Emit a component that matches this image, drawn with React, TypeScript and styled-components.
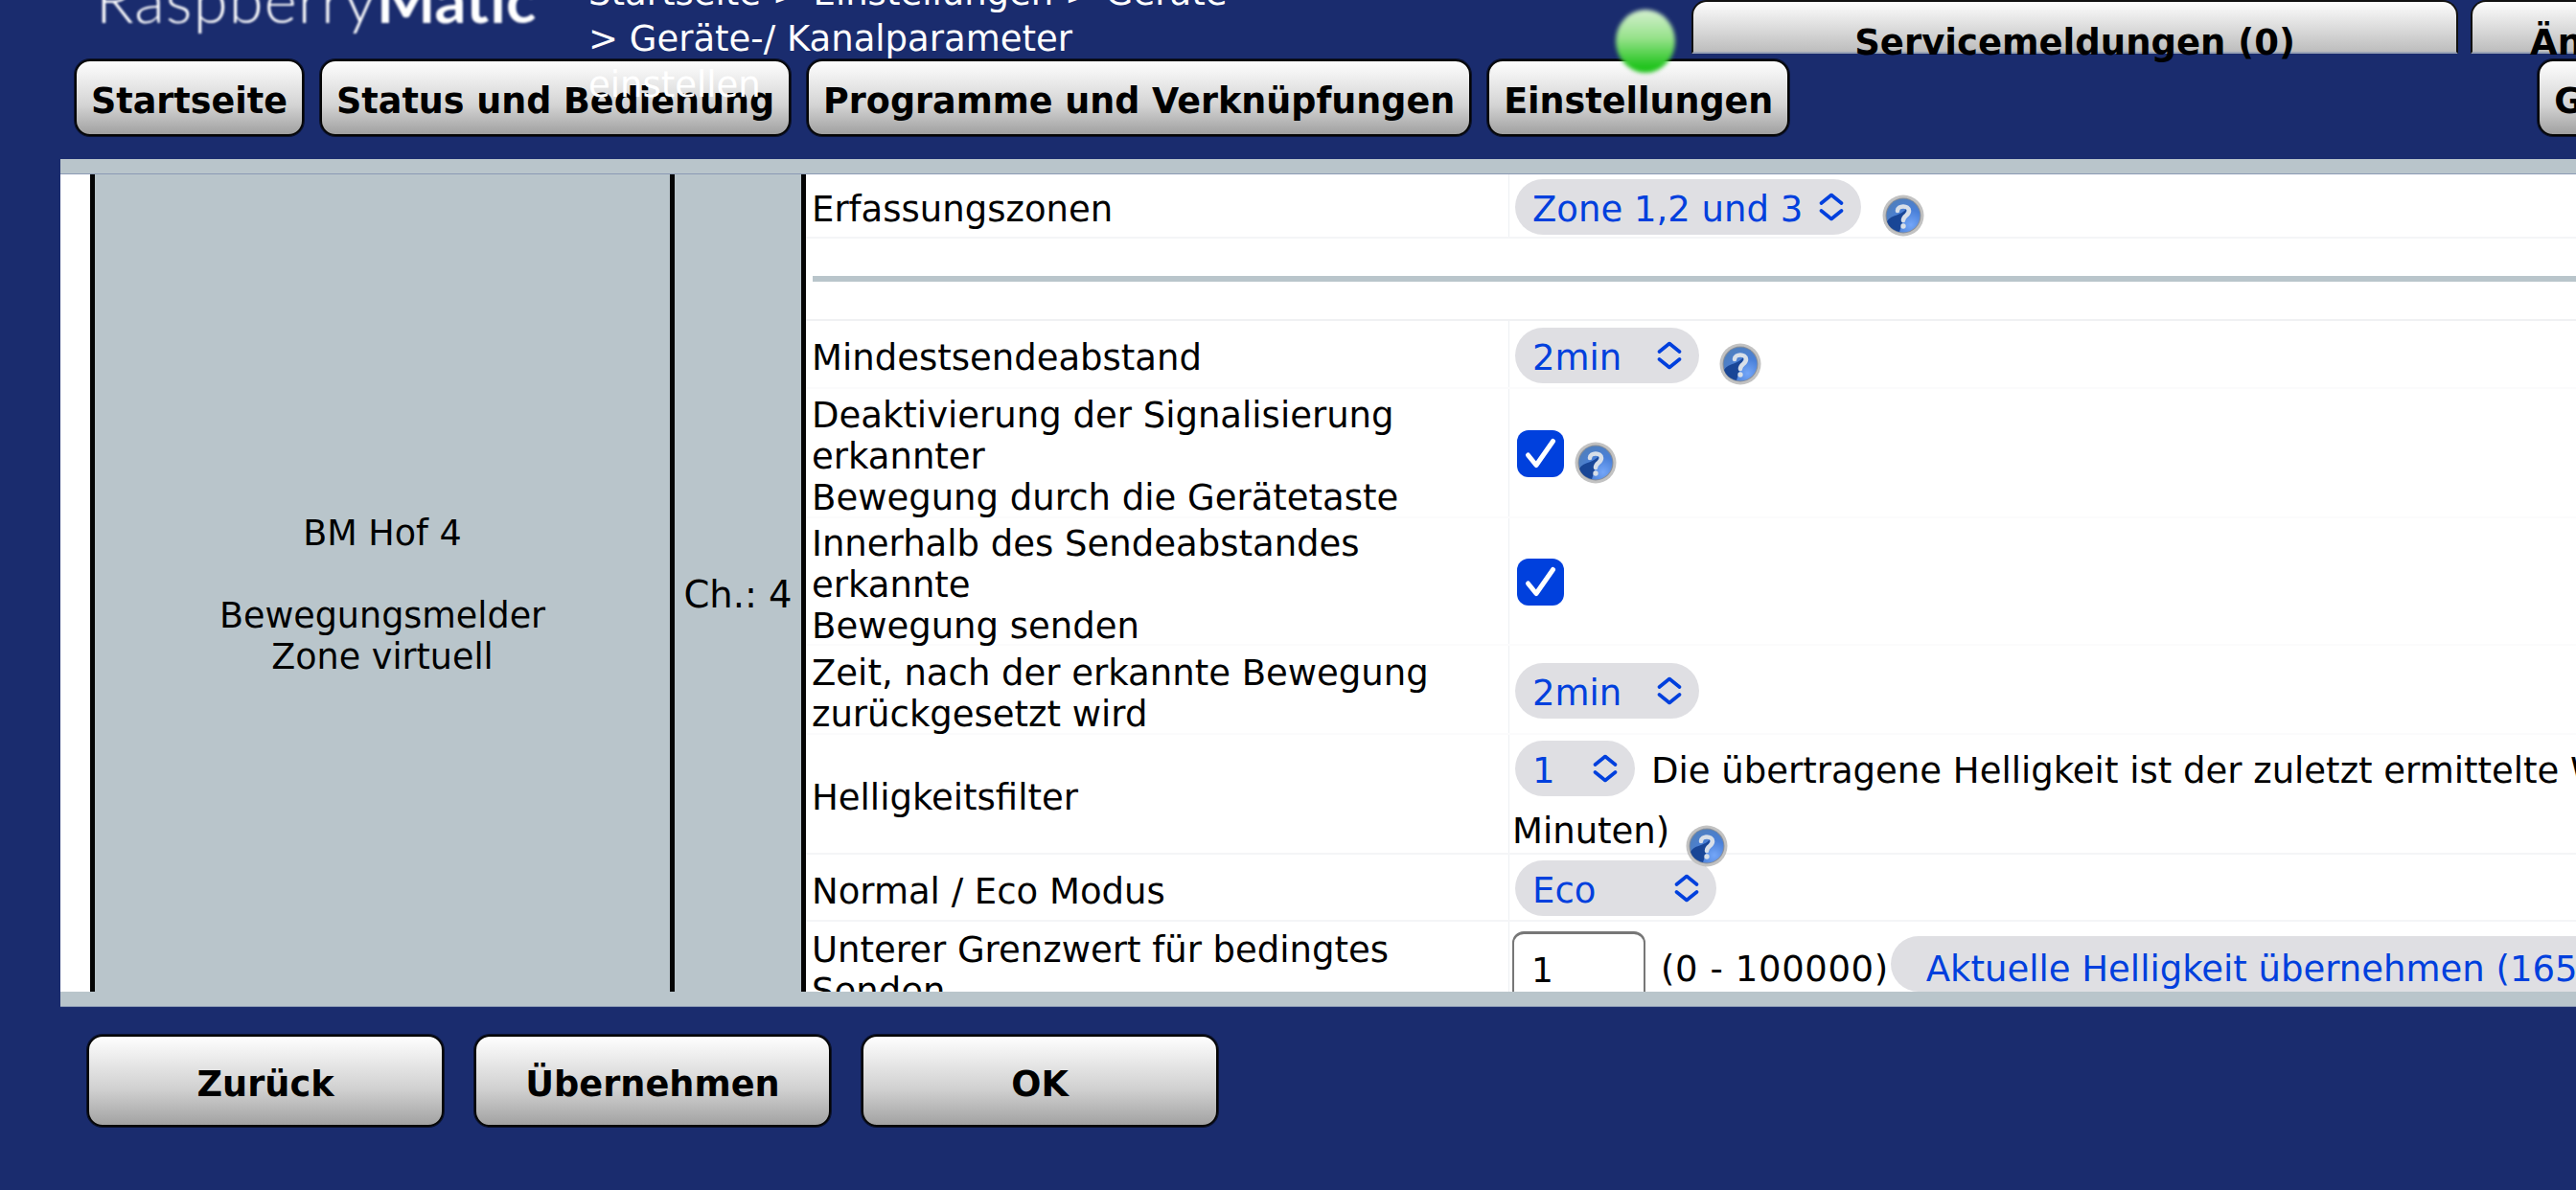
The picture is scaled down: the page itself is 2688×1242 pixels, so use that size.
import React from "react"
import styled, { createGlobalStyle } from "styled-components"

const NAVY = "#1a2c6e"
const BAND = "#b9c5cb"
const BLUE = "#0040dd"
const FONT = `"DejaVu Sans", Verdana, sans-serif`

const GlobalStyle = createGlobalStyle`
  html, body {
    margin: 0;
    height: 100%;
    overflow: hidden;
    background: ${NAVY};
    font-family: ${FONT};
    color: #000;
  }
`

const Page = styled.div`
  position: relative;
  width: 2688px;
  height: 1242px;
  overflow: hidden;
`

const Header = styled.header`
  display: flex;
  height: 56px;
  padding-left: 100px;
`

const Logo = styled.div`
  flex: 0 0 514px;
  min-width: 0;
  margin-top: -33px;
  font-family: Lato, sans-serif;
  font-size: 65px;
  font-weight: 300;
  line-height: 65px;
  letter-spacing: 1.2px;
  color: #fff;
  white-space: nowrap;
  filter: blur(0.8px);
  b {
    font-weight: 700;
    letter-spacing: 0;
  }
`

const Breadcrumb = styled.div`
  position: relative;
  z-index: 2;
  flex: 0 0 1151px;
  min-width: 0;
  margin-top: -31px;
  font-size: 37px;
  line-height: 48px;
  color: #fff;
  white-space: nowrap;
  span {
    display: block;
  }
`

const Led = styled.div`
  position: absolute;
  z-index: 3;
  left: 1686px;
  top: 10px;
  width: 62px;
  height: 66px;
  border-radius: 50%;
  background: linear-gradient(#d5f0d0 0%, #97e28b 45%, #22c41e 90%);
  filter: blur(2px);
`

const ServiceButton = styled.div<{ $start?: boolean }>`
  flex: 0 0 800px;
  box-sizing: border-box;
  height: 56px;
  padding: 21px 0 0 ${(p) => (p.$start ? "60px" : "0")};
  margin-right: 13px;
  border: 2px solid #111;
  border-bottom: 2px solid #9aa3b5;
  border-radius: 16px 16px 0 0;
  background: linear-gradient(#fdfdfd, #bdbdbd);
  font-size: 37px;
  font-weight: 700;
  line-height: 43px;
  text-align: ${(p) => (p.$start ? "left" : "center")};
  white-space: nowrap;
`

const NavRow = styled.nav`
  display: flex;
  gap: 17px;
  height: 80px;
  margin-top: 6px;
  padding-left: 78px;
`

const NavButton = styled.div<{ $offset?: number }>`
  flex: none;
  box-sizing: border-box;
  height: 80px;
  padding: 7px 15px 0;
  margin-left: ${(p) => p.$offset ?? 0}px;
  display: flex;
  align-items: center;
  border: 2px solid #050505;
  box-shadow: 0 0 0 1px rgba(0, 0, 0, 0.6);
  border-radius: 16px;
  background: linear-gradient(#fefefe, #d4d4d4 60%, #a0a0a0);
  font-size: 36.5px;
  font-weight: 700;
  white-space: nowrap;
`

const Panel = styled.main`
  margin: 24px 0 0 63px;
`

const Band = styled.div`
  height: 15px;
  background: ${BAND};
  border-bottom: 1px solid #8b9ab4;
`

const Scroller = styled.div`
  height: 853px;
  overflow: hidden;
  background: #fff;
  padding-left: 31px;
`

const DeviceTable = styled.div`
  display: grid;
  grid-template-columns: 605px 137px 1fr;
  height: 876px;
`

const GrayCell = styled.div`
  box-sizing: border-box;
  display: flex;
  align-items: center;
  justify-content: center;
  padding-bottom: 3px;
  border-left: 5px solid #050505;
  background: ${BAND};
  font-size: 36.5px;
  line-height: 43px;
  text-align: center;
  white-space: nowrap;
`

const ChannelCell = styled(GrayCell)`
  font-size: 38.5px;
`

const ParamColumn = styled.div`
  border-left: 5px solid #050505;
  min-width: 0;
`

const ParamRow = styled.div<{ $height: number; $faint?: boolean }>`
  box-sizing: border-box;
  display: grid;
  grid-template-columns: 733px 1fr;
  grid-template-rows: minmax(0, 1fr);
  height: ${(p) => p.$height}px;
  border-bottom: 2px solid ${(p) => (p.$faint ? "#fbfbfc" : "#f4f5f7")};
`

const Divider = styled.div`
  box-sizing: border-box;
  height: 86px;
  padding: 39px 0 0 7px;
  border-bottom: 2px solid #f0f1f3;
  &::before {
    content: "";
    display: block;
    height: 6px;
    background: ${BAND};
  }
`

const Label = styled.div`
  display: flex;
  align-items: center;
  padding: 8px 0 0 6px;
  font-size: 37px;
  line-height: 43px;
`

const TopLabel = styled(Label)`
  align-items: flex-start;
`

const Value = styled.div`
  display: flex;
  align-items: center;
  padding: 2px 0 0 6px;
  border-left: 1px solid #eef0f3;
  font-size: 37px;
  white-space: nowrap;
`

const StackedValue = styled.div<{ $top: number }>`
  padding: ${(p) => p.$top}px 0 0 3px;
  border-left: 1px solid #eef0f3;
  font-size: 37px;
  line-height: 43px;
  white-space: nowrap;
`

const Line = styled.div`
  display: flex;
  align-items: center;
`

const PillLine = styled(Line)`
  gap: 17px;
  margin-left: 3px;
  span {
    padding-top: 5px;
  }
`

const NoteLine = styled(Line)`
  align-items: flex-start;
  span {
    padding-top: 15px;
  }
`

const InputLine = styled(Line)`
  align-items: flex-start;
`

const Pill = styled.div<{ $width: number }>`
  flex: none;
  box-sizing: border-box;
  display: flex;
  align-items: center;
  justify-content: space-between;
  width: ${(p) => p.$width}px;
  height: 58px;
  padding: 0 18px;
  border-radius: 29px;
  background: #dfdfe3;
  color: ${BLUE};
  font-size: 37px;
  span {
    padding-top: 5px;
  }
`

const CheckBox = styled.div`
  flex: none;
  width: 49px;
  height: 49px;
  margin-left: 2px;
  border-radius: 12px;
  background: ${BLUE};
  svg {
    display: block;
  }
`

const HelpWrap = styled.span<{ $left: number }>`
  flex: none;
  display: block;
  width: 44px;
  height: 44px;
  margin: 18px 0 0 ${(p) => p.$left}px;
  svg {
    display: block;
    filter: blur(0.4px);
  }
`

const NoteHelp = styled(HelpWrap)`
  margin-top: 15px;
`

const NumberInput = styled.div`
  flex: none;
  box-sizing: border-box;
  width: 139px;
  height: 76px;
  padding: 16px 0 0 18px;
  border: 2px solid #777;
  border-top-width: 3px;
  border-radius: 12px;
  font-size: 36px;
  line-height: 43px;
`

const Range = styled.span`
  margin: 18px 0 0 16px;
  letter-spacing: 0.6px;
`

const ActionPill = styled.div`
  flex: none;
  height: 58px;
  margin: 5px 0 0 2px;
  padding: 0 40px 0 37px;
  border-radius: 29px;
  background: #dfdfe3;
  color: ${BLUE};
  font-size: 37px;
  line-height: 70px;
`

const Footer = styled.footer`
  display: flex;
  gap: 32px;
  margin-top: 29px;
  padding-left: 91px;
`

const FooterButton = styled.div`
  box-sizing: border-box;
  display: flex;
  align-items: center;
  justify-content: center;
  width: 372px;
  height: 96px;
  padding-top: 6px;
  border: 2px solid #050505;
  box-shadow: 0 0 0 1px rgba(0, 0, 0, 0.6);
  border-radius: 16px;
  background: linear-gradient(#fefefe, #d0d0d0 60%, #a2a2a2);
  font-size: 36.7px;
  font-weight: 700;
`

const Chevrons = () => (
  <svg width="26" height="30" viewBox="0 0 26 30" fill="none" stroke={BLUE} strokeWidth="3.6" strokeLinecap="round" strokeLinejoin="round">
    <polyline points="2.5,11 13,2.5 23.5,11" />
    <polyline points="2.5,19 13,27.5 23.5,19" />
  </svg>
)

const Select = ({ width, children }: { width: number; children: string }) => (
  <Pill $width={width}>
    <span>{children}</span>
    <Chevrons />
  </Pill>
)

const Check = () => (
  <CheckBox>
    <svg width="49" height="49" viewBox="0 0 49 49" fill="none" stroke="#fff" strokeWidth="5" strokeLinecap="round" strokeLinejoin="round">
      <polyline points="11.5,26 20,36.5 37.5,11.5" />
    </svg>
  </CheckBox>
)

const HelpGlyph = ({ id }: { id: string }) => (
  <svg width="44" height="44" viewBox="0 0 44 44">
    <defs>
      <radialGradient id={id} cx="72%" cy="78%" r="80%">
        <stop offset="0%" stopColor="#74a6f8" />
        <stop offset="55%" stopColor="#4a80d8" />
        <stop offset="100%" stopColor="#4f7fc0" />
      </radialGradient>
    </defs>
    <circle cx="22" cy="22" r="21.5" fill="#c2c2c2" />
    <circle cx="22" cy="22" r="18.5" fill="#8b8f96" />
    <circle cx="22" cy="22" r="17.5" fill={`url(#${id})`} />
    <path d="M5 28 C10 20 20 23 26 14 L18 39 C11 37 7 34 5 28 Z" fill="#143f8f" opacity="0.9" />
    <path d="M16 17 C16 11 28 11 28 17 C28 22 22 22 22 27" fill="none" stroke="#d8dfe8" strokeWidth="4.6" strokeLinecap="round" />
    <circle cx="22" cy="33" r="2.7" fill="#d8dfe8" />
  </svg>
)

const Help = ({ left }: { left: number }) => {
  const id = React.useId()
  return (
    <HelpWrap $left={left}>
      <HelpGlyph id={id} />
    </HelpWrap>
  )
}

const InlineHelp = ({ left }: { left: number }) => {
  const id = React.useId()
  return (
    <NoteHelp $left={left}>
      <HelpGlyph id={id} />
    </NoteHelp>
  )
}

export default function App() {
  return (
    <Page>
      <GlobalStyle />
      <Header>
        <Logo>
          Raspberry<b>Matic</b>
        </Logo>
        <Breadcrumb>
          <span>Startseite &gt; Einstellungen &gt; Geräte</span>
          <span>&gt; Geräte-/ Kanalparameter</span>
          <span>einstellen</span>
        </Breadcrumb>
        <ServiceButton>Servicemeldungen (0)</ServiceButton>
        <ServiceButton $start>Änderungen (0)</ServiceButton>
      </Header>
      <Led />
      <NavRow>
        <NavButton>Startseite</NavButton>
        <NavButton>Status und Bedienung</NavButton>
        <NavButton>Programme und Verknüpfungen</NavButton>
        <NavButton>Einstellungen</NavButton>
        <NavButton $offset={764}>Geräte anlernen</NavButton>
      </NavRow>
      <Panel>
        <Band />
        <Scroller>
          <DeviceTable>
            <GrayCell>
              <div>
                BM Hof 4
                <br />
                <br />
                Bewegungsmelder
                <br />
                Zone virtuell
              </div>
            </GrayCell>
            <ChannelCell>Ch.: 4</ChannelCell>
            <ParamColumn>
              <ParamRow $height={67}>
                <Label>Erfassungszonen</Label>
                <Value>
                  <Select width={361}>Zone 1,2 und 3</Select>
                  <Help left={22} />
                </Value>
              </ParamRow>
              <Divider />
              <ParamRow $height={71} $faint>
                <Label>Mindestsendeabstand</Label>
                <Value>
                  <Select width={192}>2min</Select>
                  <Help left={21} />
                </Value>
              </ParamRow>
              <ParamRow $height={135} $faint>
                <Label>
                  <div>
                    Deaktivierung der Signalisierung erkannter
                    <br />
                    Bewegung durch die Gerätetaste
                  </div>
                </Label>
                <Value>
                  <Check />
                  <Help left={11} />
                </Value>
              </ParamRow>
              <ParamRow $height={133} $faint>
                <Label>
                  <div>
                    Innerhalb des Sendeabstandes erkannte
                    <br />
                    Bewegung senden
                  </div>
                </Label>
                <Value>
                  <Check />
                </Value>
              </ParamRow>
              <ParamRow $height={93} $faint>
                <Label>
                  <div>Zeit, nach der erkannte Bewegung zurückgesetzt wird</div>
                </Label>
                <Value>
                  <Select width={192}>2min</Select>
                </Value>
              </ParamRow>
              <ParamRow $height={125}>
                <Label>Helligkeitsfilter</Label>
                <StackedValue $top={6}>
                  <PillLine>
                    <Select width={125}>1</Select>
                    <span>Die übertragene Helligkeit ist der zuletzt ermittelte Wert der letzten</span>
                  </PillLine>
                  <NoteLine>
                    <span>Minuten)</span>
                    <InlineHelp left={17} />
                  </NoteLine>
                </StackedValue>
              </ParamRow>
              <ParamRow $height={70}>
                <Label>Normal / Eco Modus</Label>
                <Value>
                  <Select width={210}>Eco</Select>
                </Value>
              </ParamRow>
              <ParamRow $height={100}>
                <TopLabel>
                  <div>Unterer Grenzwert für bedingtes Senden</div>
                </TopLabel>
                <StackedValue $top={10}>
                  <InputLine>
                    <NumberInput>1</NumberInput>
                    <Range>(0 - 100000)</Range>
                    <ActionPill>Aktuelle Helligkeit übernehmen (165 Lux)</ActionPill>
                  </InputLine>
                </StackedValue>
              </ParamRow>
            </ParamColumn>
          </DeviceTable>
        </Scroller>
        <Band />
      </Panel>
      <Footer>
        <FooterButton>Zurück</FooterButton>
        <FooterButton>Übernehmen</FooterButton>
        <FooterButton>OK</FooterButton>
      </Footer>
    </Page>
  )
}
